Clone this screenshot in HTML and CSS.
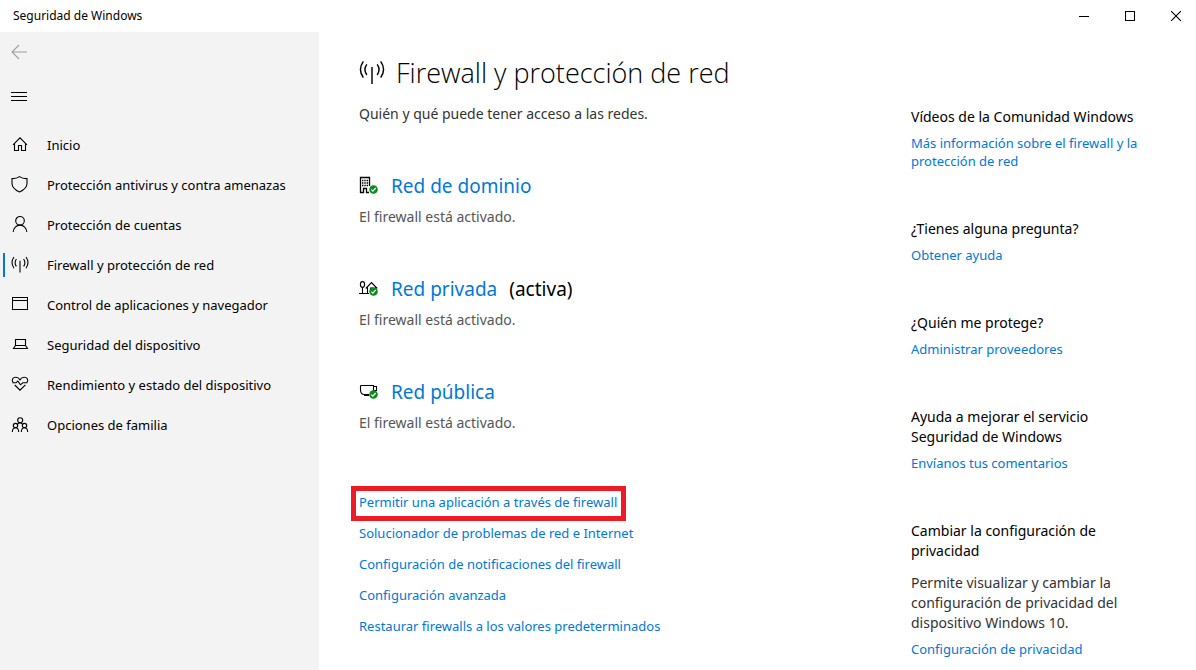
FILE: index.html
```html
<!DOCTYPE html>
<html lang="es">
<head>
<meta charset="utf-8">
<meta name="viewport" content="width=device-width, initial-scale=1">
<title>Seguridad de Windows</title>
<link rel="stylesheet" href="styles.css">
</head>
<body>
<svg class="defs" aria-hidden="true">
  <symbol id="antenna" viewBox="0 0 18 18">
    <path d="M9 4.8V16.6M5.4 3Q2.8 6.6 5.4 10.4M12.6 3Q15.2 6.6 12.6 10.4M3 1Q-1 6.6 3 12.2M15 1Q19 6.6 15 12.2"/>
  </symbol>
  <symbol id="ok" viewBox="0 0 9 9">
    <circle cx="4.5" cy="4.5" r="4.3" fill="#0b8a1d" stroke="none"/>
    <path d="M2.3 4.6L3.9 6.1L6.7 3" stroke="#fff" stroke-width="1.2"/>
  </symbol>
</svg>
<header class="titlebar">
  <span class="app-name">Seguridad de Windows</span>
  <div class="window-buttons">
    <button type="button" aria-label="Minimizar"><svg class="icon crisp" width="10" height="10" viewBox="0 0 10 10"><path d="M0 5.5H10"/></svg></button>
    <button type="button" aria-label="Maximizar"><svg class="icon crisp" width="10" height="10" viewBox="0 0 10 10"><path d="M.5 .5H9.5V9.5H.5Z"/></svg></button>
    <button type="button" aria-label="Cerrar"><svg class="icon" width="10" height="10" viewBox="0 0 10 10"><path d="M0 0L10 10M10 0L0 10"/></svg></button>
  </div>
</header>
<div class="layout">
  <nav class="sidebar" aria-label="Secciones">
    <button type="button" class="tool back" aria-label="Atrás" disabled><svg class="icon" width="16" height="16" viewBox="0 0 16 16"><path d="M16 8H1M8 1L1 8L8 15"/></svg></button>
    <button type="button" class="tool" aria-label="Menú"><svg class="icon crisp" width="16" height="16" viewBox="0 0 16 16"><path d="M0 4.5H16M0 8.5H16M0 12.5H16"/></svg></button>
    <ul class="menu">
      <li><a href="#"><svg class="icon" width="18" height="18" viewBox="0 0 18 18"><path d="M2 8.8L9 1.8L16 8.8M3.5 7.5V14.5H7.5V9.5H10.5V14.5H14.5V7.5"/></svg>Inicio</a></li>
      <li><a href="#"><svg class="icon" width="18" height="18" viewBox="0 0 18 18"><path d="M8.5 .6C10.4 2 13.2 2.7 16 2.6V7.5C16 11.5 12.5 14.2 8.5 16C4.5 14.2 1 11.5 1 7.5V2.6C3.8 2.7 6.6 2 8.5 .6Z"/></svg>Protección antivirus y contra amenazas</a></li>
      <li><a href="#"><svg class="icon" width="18" height="18" viewBox="0 0 18 18"><circle cx="9" cy="4.8" r="4.3"/><path d="M2.2 16C2.4 12 5.3 9.1 9 9.1S15.6 12 15.8 16"/></svg>Protección de cuentas</a></li>
      <li><a href="#" aria-current="page"><svg class="icon" width="18" height="18"><use href="#antenna"/></svg>Firewall y protección de red</a></li>
      <li><a href="#"><svg class="icon crisp" width="18" height="18" viewBox="0 0 18 18"><path d="M1.5 1.5H16.5V13.5H1.5ZM1.5 4.5H16.5"/></svg>Control de aplicaciones y navegador</a></li>
      <li><a href="#"><svg class="icon" width="18" height="18" viewBox="0 0 18 18"><path d="M4.5 9.5V3.5H14.5V9.5ZM4.5 9.5L2.5 12.5H16.5L14.5 9.5"/></svg>Seguridad del dispositivo</a></li>
      <li><a href="#"><svg class="icon" width="18" height="18" viewBox="0 0 18 18"><path d="M2 6.5C.2 3.5 2 1.3 4.8 1.3C6.8 1.3 8.2 2.4 9 3.8C9.8 2.4 11.2 1.3 13.2 1.3C16 1.3 17.8 3.5 16 6.5M3.8 9L9 14.2L14.4 8.8M1.5 6.8H5L6.8 5.1L9.5 8.8L11.8 6.8H16.4"/></svg>Rendimiento y estado del dispositivo</a></li>
      <li><a href="#"><svg class="icon" width="18" height="18" viewBox="0 0 18 18"><circle cx="9.2" cy="4.3" r="2.5"/><circle cx="4.5" cy="9.6" r="2.2"/><circle cx="13.5" cy="9.6" r="2.2"/><path d="M1.3 16C1.4 13.3 2.8 11.8 4.5 11.8S7.6 13.3 7.7 16M10.3 16C10.4 13.3 11.8 11.8 13.5 11.8S16.6 13.3 16.7 16M6.2 8.3Q9 5.5 11.8 8.3"/></svg>Opciones de familia</a></li>
    </ul>
  </nav>
  <main class="content">
    <h1><svg class="icon title-icon" width="26" height="26"><use href="#antenna"/></svg>Firewall y protección de red</h1>
    <p class="lead">Quién y qué puede tener acceso a las redes.</p>
    <section class="network">
      <h2><svg class="icon" width="20" height="20" viewBox="0 0 20 20"><path d="M1.5 17V1.5H10.5V10M1 16.5H4.5V12.5H7.5V16.5H10" stroke-width="1.3"/><path d="M3 4.5H9M3 7H9M3 9.5H9" stroke-width="1.5" stroke-dasharray="1.4 .9"/><use href="#ok" x="10" y="9" width="9" height="9"/></svg><a href="#">Red de dominio</a></h2>
      <p>El firewall está activado.</p>
    </section>
    <section class="network">
      <h2><svg class="icon" width="20" height="20" viewBox="0 0 20 20"><ellipse cx="3.5" cy="5.5" rx="2.1" ry="2.9"/><path d="M3.5 8.4V14.5M0 14.5H10M6.8 9.5L12.5 3.5L18.2 9.5M8.5 8.5V14.5M16.5 7.5V10M11.5 12V9H14.5"/><use href="#ok" x="10" y="8" width="9" height="9"/></svg><a href="#">Red privada</a><span>(activa)</span></h2>
      <p>El firewall está activado.</p>
    </section>
    <section class="network">
      <h2><svg class="icon" width="20" height="20" viewBox="0 0 20 20"><path d="M1.5 3.5H14.5V9M1.5 3.5V8C1.5 11 3 12.5 5.5 12.5H10M14.5 4.5H17.5V8.5H14.5M5 13.5H10"/><use href="#ok" x="10" y="8" width="9" height="9"/></svg><a href="#">Red pública</a></h2>
      <p>El firewall está activado.</p>
    </section>
    <ul class="actions">
      <li class="marked"><a href="#">Permitir una aplicación a través de firewall</a></li>
      <li><a href="#">Solucionador de problemas de red e Internet</a></li>
      <li><a href="#">Configuración de notificaciones del firewall</a></li>
      <li><a href="#">Configuración avanzada</a></li>
      <li><a href="#">Restaurar firewalls a los valores predeterminados</a></li>
    </ul>
  </main>
  <aside class="help">
    <section><h3>Vídeos de la Comunidad Windows</h3><a href="#">Más información sobre el firewall y la protección de red</a></section>
    <section><h3>¿Tienes alguna pregunta?</h3><a href="#">Obtener ayuda</a></section>
    <section><h3>¿Quién me protege?</h3><a href="#">Administrar proveedores</a></section>
    <section><h3>Ayuda a mejorar el servicio Seguridad de Windows</h3><a href="#">Envíanos tus comentarios</a></section>
    <section><h3>Cambiar la configuración de privacidad</h3><p>Permite visualizar y cambiar la configuración de privacidad del dispositivo Windows 10.</p><a href="#">Configuración de privacidad</a></section>
  </aside>
</div>
</body>
</html>
```
FILE: styles.css
```css
* { box-sizing: border-box; }
body {
  margin: 0;
  min-height: 100vh;
  display: flex;
  flex-direction: column;
  background: #fff;
  color: #000;
  font: 13px/20px "Noto Sans", "Open Sans", sans-serif;
}
h1, h2, h3, p, ul { margin: 0; padding: 0; font-weight: 400; }
ul { list-style: none; }
a { color: #0078d7; text-decoration: none; }
button { border: 0; padding: 0; background: none; color: inherit; font: inherit; }
.defs { display: none; }
.icon { flex: none; fill: none; stroke: currentColor; stroke-width: 1.1; }
.crisp { stroke-width: 1; shape-rendering: crispEdges; }

.titlebar {
  display: flex;
  justify-content: space-between;
  align-items: center;
  height: 32px;
  padding-left: 13px;
  font-size: 12px;
}
.window-buttons { display: flex; align-self: stretch; margin-right: -3px; overflow: hidden; }
.window-buttons button { display: grid; place-items: center; width: 46px; }

.layout { flex: 1; display: grid; grid-template-columns: 319px 1fr 285px; }

.sidebar { background: #f3f3f3; }
.tool { display: flex; align-items: center; width: 48px; height: 40px; padding-left: 11px; }
.tool + .tool { margin-top: 4px; }
.back { color: #a0a0a0; }
.menu { margin-top: 9px; }
.menu a {
  display: flex;
  align-items: center;
  gap: 18px;
  height: 40px;
  padding-left: 11px;
  color: #000;
}
.menu a[aria-current] {
  padding-left: 8px;
  margin-left: 3px;
  background: linear-gradient(#0078d7, #0078d7) left center / 2px 24px no-repeat;
}

.content { padding: 23px 20px 24px 40px; }
h1 {
  display: flex;
  align-items: center;
  gap: 11px;
  font-family: "Open Sans", sans-serif;
  font-size: 27px;
  font-weight: 300;
  line-height: 36px;
}
.title-icon { stroke-width: 1; }
.lead { margin-top: 13px; font-size: 14px; color: #333; }
.network { margin-top: 48px; }
.network h2 { display: flex; align-items: center; gap: 12px; font-size: 19px; line-height: 28px; }
.network p { margin-top: 7px; font-size: 14px; color: #555; }
.actions { display: flex; flex-direction: column; align-items: flex-start; gap: 11px; margin-top: 59px; }
.marked { margin: -6px -8px -9px; padding: 1px 4px 4px 3px; border: 5px solid #ed1c24; }

.help { display: flex; flex-direction: column; gap: 49px; padding: 75px 45px 11px 0; }
.help h3 { font-size: 14px; }
.help a { display: block; margin-top: 7px; line-height: 18px; }
.help p { margin-top: 12px; font-size: 14px; color: #333; }
```
